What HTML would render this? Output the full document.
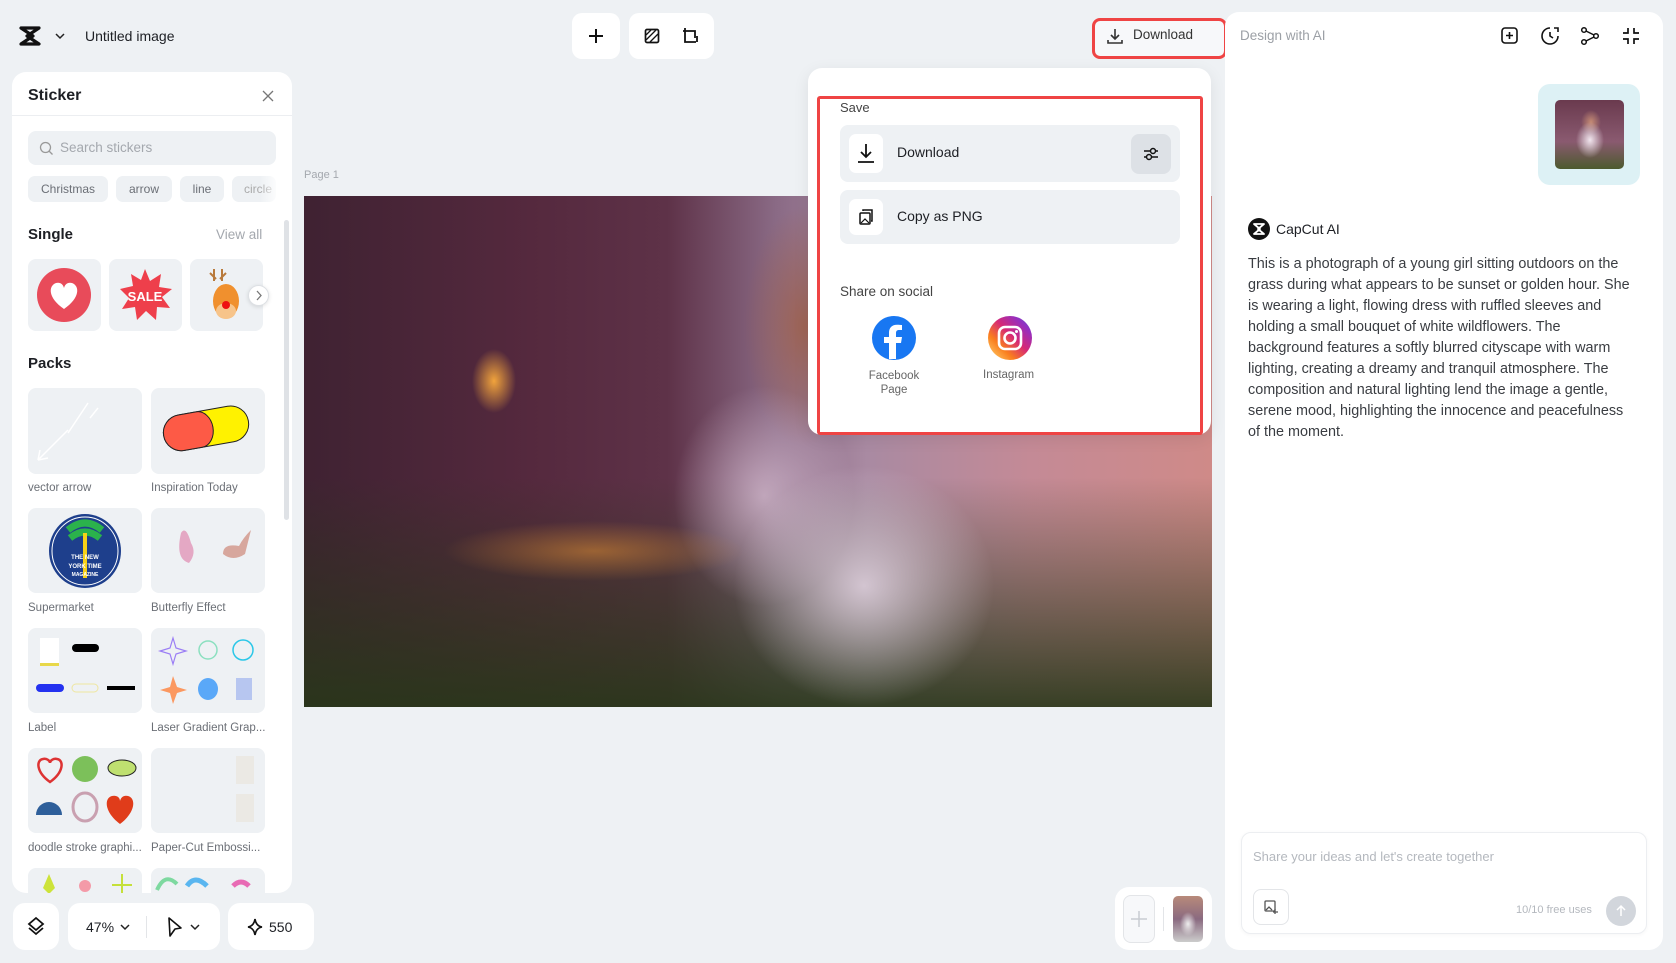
<!DOCTYPE html>
<html><head><meta charset="utf-8"><style>
*{box-sizing:border-box;margin:0;padding:0}
body{width:1676px;height:963px;background:#eef1f4;font-family:"Liberation Sans",sans-serif;color:#1d1f24;position:relative;overflow:hidden}
.abs{position:absolute}
.card{position:absolute;background:#fff;border-radius:12px}
.t{position:absolute;white-space:nowrap}
.tile{position:absolute;background:#eef1f4;border-radius:8px}
.lab{position:absolute;font-size:11.5px;color:#6b6f76;white-space:nowrap}
.chip{position:absolute;top:176px;height:26px;background:#eef1f4;border-radius:7px;font-size:12px;color:#6b6f76;line-height:26px;text-align:center}
</style></head><body>

<svg class="abs" style="left:19px;top:26px" width="22" height="20" viewBox="0 0 22 20"><path d="M2 2h18L8 10l12 8H2l12-8z" fill="none" stroke="#111" stroke-width="3.2" stroke-linejoin="round"/></svg>
<svg class="abs" style="left:55px;top:32px" width="10" height="8" viewBox="0 0 10 8"><path d="M1 2l4 4 4-4" fill="none" stroke="#222" stroke-width="1.5"/></svg>
<div class="t" style="left:85px;top:28px;font-size:14px;color:#1d1f24">Untitled image</div>

<div class="card" style="left:572px;top:13px;width:48px;height:46px;border-radius:10px"></div>
<svg class="abs" style="left:587px;top:27px" width="18" height="18"><path d="M9 2v14M2 9h14" stroke="#111" stroke-width="2"/></svg>
<div class="card" style="left:629px;top:13px;width:85px;height:46px;border-radius:10px"></div>
<svg class="abs" style="left:643px;top:27px" width="18" height="18"><rect x="2.5" y="2.5" width="13" height="13" rx="1.5" fill="none" stroke="#111" stroke-width="1.7"/><path d="M3 13L13 3M7 15L15 7M3 8L8 3" stroke="#111" stroke-width="1.3"/></svg>
<svg class="abs" style="left:681px;top:26px" width="18" height="20"><path d="M4 2v14h11M2 5h12v7M16 10v6" fill="none" stroke="#111" stroke-width="1.8"/></svg>

<div class="card" style="left:1092px;top:18px;width:135px;height:41px;border-radius:8px;background:#f7f8fa;border:3px solid #ef4444"></div>
<svg class="abs" style="left:1106px;top:27px" width="18" height="18"><path d="M9 2v10M5 8l4 4 4-4M2 13v3h14v-3" fill="none" stroke="#333" stroke-width="1.6"/></svg>
<div class="t" style="left:1133px;top:27px;font-size:13.5px;color:#333">Download</div>

<div class="card" style="left:12px;top:72px;width:280px;height:821px;border-radius:14px;overflow:hidden">
  <div class="t" style="left:16px;top:15px;font-size:16px;font-weight:bold">Sticker</div>
  <svg class="abs" style="left:249px;top:17px" width="14" height="14"><path d="M2 2l10 10M12 2L2 12" stroke="#777" stroke-width="1.3"/></svg>
  <div class="abs" style="left:0;top:43px;width:280px;height:1px;background:#eceef1"></div>
  <div class="abs" style="left:16px;top:59px;width:248px;height:34px;background:#eef1f4;border-radius:8px"></div>
  <svg class="abs" style="left:27px;top:69px" width="15" height="15"><circle cx="6.5" cy="6.5" r="5" fill="none" stroke="#999" stroke-width="1.3"/><path d="M10 10l3.5 3.5" stroke="#999" stroke-width="1.3"/></svg>
  <div class="t" style="left:48px;top:68px;font-size:13.5px;color:#a4a8ae">Search stickers</div>
  <div class="abs" style="left:272px;top:148px;width:5px;height:300px;background:#dfe2e6;border-radius:3px"></div>
</div>
<div class="chip" style="left:28px;width:80px">Christmas</div>
<div class="chip" style="left:116px;width:56px">arrow</div>
<div class="chip" style="left:180px;width:44px">line</div>
<div class="chip" style="left:232px;width:44px;color:#aaa;text-align:left;padding-left:12px;overflow:hidden">circle</div>
<div class="abs" style="left:260px;top:174px;width:20px;height:30px;background:linear-gradient(90deg,rgba(255,255,255,0),#fff)"></div>

<div class="t" style="left:28px;top:226px;font-size:15px;font-weight:bold">Single</div>
<div class="t" style="left:216px;top:227px;font-size:13.5px;color:#a4a8ae">View all</div>
<div class="tile" style="left:28px;top:259px;width:73px;height:72px"><svg width="73" height="72"><circle cx="36" cy="36" r="27" fill="#e84b5a"/><path d="M36 50C20 39 20 27 28 24c4-1 7 1 8 5 1-4 4-6 8-5 8 3 8 15-8 26z" fill="#fff"/></svg></div>
<div class="tile" style="left:109px;top:259px;width:73px;height:72px"><svg width="73" height="72"><polygon points="36,10 41,22 52,15 50,28 63,30 53,38 61,49 48,48 47,61 37,52 28,61 26,48 13,50 20,39 11,30 24,27 22,15 32,21" fill="#ee3f4b"/><text x="36" y="42" font-size="13" font-weight="bold" fill="#fff" text-anchor="middle" font-family="Liberation Sans">SALE</text></svg></div>
<div class="tile" style="left:190px;top:259px;width:73px;height:72px;overflow:hidden"><svg width="73" height="72"><path d="M24 10v12M32 10v12M20 14l6 6M36 14l-6 6" stroke="#b87a3c" stroke-width="2"/><ellipse cx="36" cy="42" rx="13" ry="17" fill="#f0902e"/><ellipse cx="36" cy="52" rx="10" ry="8" fill="#f7c48a"/><circle cx="36" cy="46" r="4" fill="#e11"/></svg></div>
<div class="abs" style="left:248px;top:285px;width:21px;height:21px;border-radius:50%;background:#fff;border:1px solid #dde0e4;box-shadow:0 1px 4px rgba(0,0,0,.12)"><svg width="19" height="19"><path d="M8 5l4 4.5-4 4.5" fill="none" stroke="#777" stroke-width="1.3"/></svg></div>

<div class="t" style="left:28px;top:355px;font-size:15px;font-weight:bold">Packs</div>
<div class="tile" style="left:28px;top:388px;width:114px;height:86px"><svg width="114" height="86"><path d="M10 72l30-30M10 72l2-10M10 72l10-2M60 15l-20 30M70 20l-8 10" stroke="#fff" stroke-width="1.5" fill="none"/></svg></div>
<div class="tile" style="left:151px;top:388px;width:114px;height:86px"><svg width="114" height="86"><path d="M30 22h50a18 18 0 0 1 0 36H30a18 18 0 0 1 0-36z" fill="#fff200" stroke="#222" stroke-width="1" transform="rotate(-10 57 40)"/><path d="M30 22a18 18 0 0 0 0 36h18a14 18 0 0 0 0-36z" fill="#fd5a46" stroke="#222" stroke-width="1" transform="rotate(-10 57 40)"/></svg></div>
<div class="lab" style="left:28px;top:482px">vector arrow</div>
<div class="lab" style="left:151px;top:482px">Inspiration Today</div>

<div class="tile" style="left:28px;top:508px;width:114px;height:85px"><svg width="114" height="85"><ellipse cx="57" cy="43" rx="36" ry="37" fill="#1e3f8c"/><ellipse cx="57" cy="43" rx="33" ry="34" fill="none" stroke="#fff" stroke-width="1"/><path d="M40 22q17-14 34 0M42 30q15-12 30 0" stroke="#2bb24c" stroke-width="7" fill="none"/><rect x="55" y="25" width="4" height="45" fill="#f7d117"/><text x="57" y="51" font-size="6" font-weight="bold" fill="#fff" text-anchor="middle" font-family="Liberation Sans">THE    NEW</text><text x="57" y="60" font-size="6" font-weight="bold" fill="#fff" text-anchor="middle" font-family="Liberation Sans">YORK   TIME</text><text x="57" y="68" font-size="5" font-weight="bold" fill="#fff" text-anchor="middle" font-family="Liberation Sans">MAGAZINE</text></svg></div>
<div class="tile" style="left:151px;top:508px;width:114px;height:85px"><svg width="114" height="85"><path d="M30 25q5-8 10 10 6 10-2 20-14-4-8-30z" fill="#e4a8c4"/><path d="M100 22q-8 8-12 16-16-3-16 8 10 8 22 0z" fill="#d7a79d"/></svg></div>
<div class="lab" style="left:28px;top:602px">Supermarket</div>
<div class="lab" style="left:151px;top:602px">Butterfly Effect</div>

<div class="tile" style="left:28px;top:628px;width:114px;height:85px"><svg width="114" height="85"><rect x="12" y="10" width="19" height="26" fill="#fff"/><rect x="12" y="35" width="19" height="3" fill="#e8d84a"/><rect x="44" y="16" width="27" height="8" rx="4" fill="#000"/><rect x="8" y="56" width="28" height="8" rx="4" fill="#2432f0"/><rect x="44" y="56" width="26" height="8" rx="4" fill="none" stroke="#eee6a0"/><rect x="79" y="58" width="28" height="4" fill="#000"/></svg></div>
<div class="tile" style="left:151px;top:628px;width:114px;height:85px"><svg width="114" height="85"><path d="M22 10l3 10 10 3-10 3-3 10-3-10-10-3 10-3z" fill="none" stroke="#9b7ef5" stroke-width="1.2"/><circle cx="92" cy="22" r="10" fill="none" stroke="#2bc7e8" stroke-width="1.5"/><circle cx="57" cy="22" r="9" fill="none" stroke="#8ce0c0" stroke-width="1.5"/><path d="M22 48l4 11 10 3-10 3-4 11-3-11-10-3 10-3z" fill="#fb9860"/><ellipse cx="57" cy="61" rx="10" ry="11" fill="#5aa8f8"/><rect x="85" y="50" width="16" height="22" fill="#b7c6f0"/></svg></div>
<div class="lab" style="left:28px;top:722px">Label</div>
<div class="lab" style="left:151px;top:722px">Laser Gradient Grap...</div>

<div class="tile" style="left:28px;top:748px;width:114px;height:85px"><svg width="114" height="85"><path d="M22 34C8 24 8 12 15 11c4-1 7 2 7 4 0-2 3-5 7-4 7 1 7 13-7 23z" fill="none" stroke="#d33" stroke-width="2.5"/><circle cx="57" cy="21" r="13" fill="#7cc05a"/><ellipse cx="94" cy="20" rx="14" ry="8" fill="#bfe070" stroke="#222"/><path d="M8 67a13 13 0 0 1 26 0z" fill="#2e5f9a"/><ellipse cx="57" cy="59" rx="12" ry="14" fill="none" stroke="#c9a0b0" stroke-width="3"/><path d="M92 76C76 64 76 50 84 48c4-1 8 1 8 5 1-4 4-6 8-5 8 2 8 16-8 28z" fill="#e03c1a"/></svg></div>
<div class="tile" style="left:151px;top:748px;width:114px;height:85px"><svg width="114" height="85"><rect x="85" y="8" width="18" height="28" fill="#ebe9e4"/><rect x="85" y="46" width="18" height="28" fill="#ebe9e4"/></svg></div>
<div class="lab" style="left:28px;top:842px">doodle stroke graphi...</div>
<div class="lab" style="left:151px;top:842px">Paper-Cut Embossi...</div>
<div class="tile" style="left:28px;top:868px;width:114px;height:25px;border-radius:8px 8px 0 0;overflow:hidden"><svg width="114" height="25"><path d="M21 6l6 14-6 6-6-6z" fill="#cde33a"/><circle cx="57" cy="18" r="6" fill="#f49aa8"/><path d="M94 6v20M84 17h20" stroke="#c5e03a" stroke-width="2"/></svg></div>
<div class="tile" style="left:151px;top:868px;width:114px;height:25px;border-radius:8px 8px 0 0;overflow:hidden"><svg width="114" height="25"><path d="M6 22q8-18 20-6" stroke="#7ed9a0" stroke-width="4" fill="none"/><path d="M36 18q8-12 20 0" stroke="#5ab6f0" stroke-width="5" fill="none"/><path d="M82 18q8-8 16 0" stroke="#e86bb4" stroke-width="5" fill="none"/></svg></div>

<div class="card" style="left:13px;top:903px;width:46px;height:47px;border-radius:12px"></div>
<svg class="abs" style="left:26px;top:916px" width="20" height="20"><path d="M10 2l7 6-7 6-7-6z" fill="none" stroke="#111" stroke-width="1.8"/><path d="M3 12l7 6 7-6" fill="none" stroke="#111" stroke-width="1.8"/></svg>
<div class="card" style="left:68px;top:903px;width:152px;height:47px;border-radius:12px"></div>
<div class="t" style="left:86px;top:919px;font-size:14px">47%</div>
<svg class="abs" style="left:120px;top:923px" width="10" height="8"><path d="M1 2l4 4 4-4" fill="none" stroke="#222" stroke-width="1.5"/></svg>
<div class="abs" style="left:146px;top:916px;width:1px;height:22px;background:#e3e5e8"></div>
<svg class="abs" style="left:166px;top:916px" width="18" height="22"><path d="M3 2l12 10-6 1-5 7z" fill="none" stroke="#111" stroke-width="1.6" stroke-linejoin="round"/></svg>
<svg class="abs" style="left:190px;top:923px" width="10" height="8"><path d="M1 2l4 4 4-4" fill="none" stroke="#222" stroke-width="1.5"/></svg>
<div class="card" style="left:228px;top:903px;width:86px;height:47px;border-radius:12px"></div>
<svg class="abs" style="left:247px;top:918px" width="16" height="18"><path d="M8 1q1 7 7 8-6 1-7 8-1-7-7-8 6-1 7-8z" fill="none" stroke="#111" stroke-width="1.6"/></svg>
<div class="t" style="left:269px;top:919px;font-size:14px">550</div>

<div class="t" style="left:304px;top:169px;font-size:11px;color:#a4a8ae">Page 1</div>
<div class="abs" style="left:304px;top:196px;width:908px;height:511px;overflow:hidden;background:
radial-gradient(ellipse 22px 32px at 190px 185px,rgba(250,170,60,.95),rgba(250,170,60,0)),
radial-gradient(ellipse 150px 30px at 290px 355px,rgba(220,140,50,.55),rgba(220,140,50,0)),
radial-gradient(ellipse 130px 120px at 560px 390px,rgba(235,220,235,.8),rgba(235,220,235,0)),
radial-gradient(ellipse 90px 110px at 460px 300px,rgba(220,195,215,.7),rgba(220,195,215,0)),
radial-gradient(ellipse 60px 120px at 500px 130px,rgba(160,95,70,.8),rgba(160,95,70,0)),
linear-gradient(180deg,rgba(0,0,0,0) 55%,rgba(40,55,25,.9) 100%),
linear-gradient(90deg,#3f2232 0%,#55293e 25%,#5e3248 40%,#8a6a85 52%,#a98aa2 62%,#c48a96 80%,#cf8a88 100%)"></div>

<div class="card" style="left:808px;top:68px;width:403px;height:367px;border-radius:14px;box-shadow:0 4px 16px rgba(0,0,0,.08)"></div>
<div class="abs" style="left:817px;top:96px;width:386px;height:339px;border:3px solid #ef4444;border-radius:3px"></div>
<div class="t" style="left:840px;top:100px;font-size:13px;color:#444">Save</div>
<div class="abs" style="left:840px;top:125px;width:340px;height:57px;background:#eef1f4;border-radius:8px"></div>
<div class="abs" style="left:849px;top:134px;width:34px;height:39px;background:#fff;border-radius:7px"></div>
<svg class="abs" style="left:856px;top:143px" width="20" height="21"><path d="M10 1v13M5 9l5 5 5-5M2 19h16" fill="none" stroke="#111" stroke-width="1.8"/></svg>
<div class="t" style="left:897px;top:144px;font-size:14px">Download</div>
<div class="abs" style="left:1131px;top:134px;width:40px;height:40px;background:#dde1e6;border-radius:8px"></div>
<svg class="abs" style="left:1141px;top:144px" width="20" height="20"><path d="M3 7h14M3 13h14" stroke="#111" stroke-width="1.5"/><circle cx="12" cy="7" r="2.5" fill="#dde1e6" stroke="#111" stroke-width="1.5"/><circle cx="8" cy="13" r="2.5" fill="#dde1e6" stroke="#111" stroke-width="1.5"/></svg>
<div class="abs" style="left:840px;top:190px;width:340px;height:54px;background:#eef1f4;border-radius:8px"></div>
<div class="abs" style="left:849px;top:199px;width:34px;height:36px;background:#fff;border-radius:7px"></div>
<svg class="abs" style="left:858px;top:208px" width="16" height="18"><rect x="2" y="5" width="10" height="11" rx="1" fill="none" stroke="#111" stroke-width="1.5"/><path d="M5 3V2h9v11h-1" fill="none" stroke="#111" stroke-width="1.5"/><path d="M3 15l4-4 4 4" fill="none" stroke="#111" stroke-width="1.2"/></svg>
<div class="t" style="left:897px;top:208px;font-size:14px">Copy as PNG</div>
<div class="t" style="left:840px;top:284px;font-size:13.5px;color:#444">Share on social</div>
<svg class="abs" style="left:871px;top:315px" width="46" height="46"><circle cx="23" cy="23" r="22" fill="#1877f2"/><path d="M25 44V28h5l1-6h-6v-4c0-2 1-3 3-3h3v-5c-1 0-3-.3-5-.3-5 0-8 3-8 8v4.3h-5v6h5v16" fill="#fff"/></svg>
<div class="t" style="left:867px;top:369px;font-size:11.5px;color:#666;text-align:center;line-height:14px;width:54px">Facebook<br>Page</div>
<svg class="abs" style="left:987px;top:315px" width="46" height="46"><defs><linearGradient id="ig" x1="0" y1="1" x2="1" y2="0"><stop offset="0" stop-color="#feda75"/><stop offset=".3" stop-color="#fa7e1e"/><stop offset=".55" stop-color="#d62976"/><stop offset=".8" stop-color="#962fbf"/><stop offset="1" stop-color="#4f5bd5"/></linearGradient></defs><circle cx="23" cy="23" r="22" fill="url(#ig)"/><rect x="12" y="12" width="22" height="22" rx="6" fill="none" stroke="#fff" stroke-width="2.6"/><circle cx="23" cy="23" r="5.5" fill="none" stroke="#fff" stroke-width="2.6"/><circle cx="29.5" cy="16.5" r="1.5" fill="#fff"/></svg>
<div class="t" style="left:983px;top:369px;font-size:11.5px;color:#666">Instagram</div>

<div class="card" style="left:1225px;top:12px;width:438px;height:938px;border-radius:14px"></div>
<div class="t" style="left:1240px;top:28px;font-size:13.5px;color:#9ca0a6">Design with AI</div>
<svg class="abs" style="left:1500px;top:26px" width="20" height="20"><rect x="2" y="2" width="15" height="15" rx="3" fill="none" stroke="#111" stroke-width="1.6"/><path d="M9.5 6v7M6 9.5h7" stroke="#111" stroke-width="1.6"/></svg>
<svg class="abs" style="left:1540px;top:26px" width="20" height="20"><path d="M10 2a8 8 0 1 0 8 8" fill="none" stroke="#111" stroke-width="1.6"/><path d="M10 6v4l3 2" fill="none" stroke="#111" stroke-width="1.6"/><path d="M14 2l4 0v4" fill="none" stroke="#111" stroke-width="1.6"/></svg>
<svg class="abs" style="left:1580px;top:26px" width="20" height="20"><circle cx="4" cy="4" r="2.3" fill="none" stroke="#111" stroke-width="1.5"/><circle cx="4" cy="16" r="2.3" fill="none" stroke="#111" stroke-width="1.5"/><circle cx="16" cy="10" r="2.3" fill="none" stroke="#111" stroke-width="1.5"/><path d="M6 5l8 4M6 15l8-4" stroke="#111" stroke-width="1.5"/></svg>
<svg class="abs" style="left:1621px;top:26px" width="20" height="20"><path d="M7 2v5H2M13 2v5h5M7 18v-5H2M13 18v-5h5" fill="none" stroke="#111" stroke-width="1.7"/></svg>
<div class="abs" style="left:1538px;top:84px;width:102px;height:101px;background:#ddf1f5;border-radius:12px"></div>
<div class="abs" style="left:1555px;top:100px;width:69px;height:69px;border-radius:5px;background:radial-gradient(ellipse 14px 18px at 35px 40px,#f1e6ee,rgba(241,230,238,0)),radial-gradient(ellipse 10px 12px at 36px 22px,#c48a74,rgba(0,0,0,0)),linear-gradient(180deg,#6a3a4e 0%,#8a5a70 60%,#4c5a2e 100%)"></div>
<svg class="abs" style="left:1248px;top:218px" width="22" height="22"><circle cx="11" cy="11" r="11" fill="#111"/><path d="M6 6h10l-6 5 6 5H6l6-5z" fill="none" stroke="#fff" stroke-width="1.8" stroke-linejoin="round"/></svg>
<div class="t" style="left:1276px;top:221px;font-size:14px">CapCut AI</div>
<div class="abs" style="left:1248px;top:254px;width:382px;font-size:14.4px;line-height:21px;color:#3a3d42">This is a photograph of a young girl sitting outdoors on the grass during what appears to be sunset or golden hour. She is wearing a light, flowing dress with ruffled sleeves and holding a small bouquet of white wildflowers. The background features a softly blurred cityscape with warm lighting, creating a dreamy and tranquil atmosphere. The composition and natural lighting lend the image a gentle, serene mood, highlighting the innocence and peacefulness of the moment.</div>

<div class="abs" style="left:1241px;top:832px;width:406px;height:102px;border:1px solid #eceef1;border-radius:10px;box-shadow:0 1px 4px rgba(0,0,0,.04)"></div>
<div class="t" style="left:1253px;top:849px;font-size:13px;color:#b4b8be">Share your ideas and let's create together</div>
<div class="abs" style="left:1253px;top:889px;width:36px;height:36px;border:1px solid #e3e5e8;border-radius:8px"></div>
<svg class="abs" style="left:1263px;top:899px" width="16" height="16"><rect x="2" y="2" width="10" height="10" rx="1" fill="none" stroke="#555" stroke-width="1.3"/><path d="M3 11l3-3 3 3M12 10v5M10 13h5" fill="none" stroke="#555" stroke-width="1.3"/></svg>
<div class="t" style="left:1516px;top:904px;font-size:11px;color:#b4b8be">10/10 free uses</div>
<div class="abs" style="left:1606px;top:896px;width:30px;height:30px;border-radius:50%;background:#d2d6dc"></div>
<svg class="abs" style="left:1613px;top:903px" width="16" height="16"><path d="M8 13V3M4 7l4-4 4 4" fill="none" stroke="#fff" stroke-width="1.5"/></svg>

<div class="card" style="left:1115px;top:887px;width:97px;height:63px;border-radius:14px"></div>
<div class="abs" style="left:1123px;top:895px;width:32px;height:48px;border:1px solid #e3e5e8;border-radius:8px;background:#f7f8fa"></div>
<svg class="abs" style="left:1129px;top:909px" width="20" height="20"><path d="M10 2v16M2 10h16" stroke="#c9ccd1" stroke-width="1.5"/></svg>
<div class="abs" style="left:1163px;top:907px;width:1px;height:24px;background:#e3e5e8"></div>
<div class="abs" style="left:1173px;top:896px;width:30px;height:46px;border-radius:5px;background:radial-gradient(ellipse 8px 12px at 15px 28px,#eee,rgba(0,0,0,0)),linear-gradient(180deg,#b88a7a,#8a6a80 50%,#ccc 100%)"></div>

</body></html>
